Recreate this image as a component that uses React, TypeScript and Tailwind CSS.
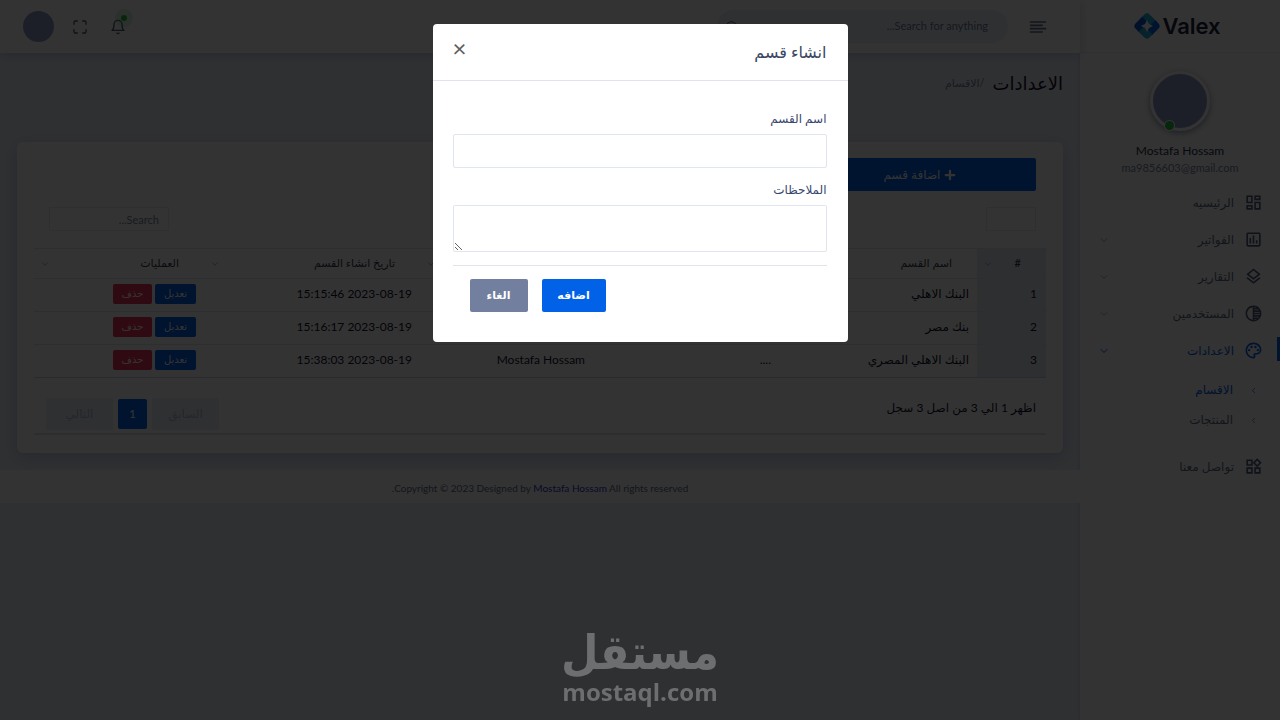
import React, { useState } from 'react';
import {
  MdOutlineDashboard,
  MdOutlineAssessment,
  MdOutlineLayers,
  MdOutlineTonality,
  MdOutlineColorLens,
  MdOutlineWidgets,
} from 'react-icons/md';
import { FiAlignLeft, FiBell, FiChevronDown, FiChevronLeft, FiMaximize, FiSearch } from 'react-icons/fi';
import { FaPlus } from 'react-icons/fa';

interface Section {
  id: number;
  name: string;
  notes: string;
  createdBy: string;
  createdAt: string;
}

const sections: Section[] = [
  { id: 1, name: 'البنك الاهلي', notes: '....', createdBy: 'Mostafa Hossam', createdAt: '2023-08-19 15:15:46' },
  { id: 2, name: 'بنك مصر', notes: '....', createdBy: 'Mostafa Hossam', createdAt: '2023-08-19 15:16:17' },
  { id: 3, name: 'البنك الاهلي المصري', notes: '....', createdBy: 'Mostafa Hossam', createdAt: '2023-08-19 15:38:03' },
];

const columns = [
  { title: '#', width: 'w-[69px]' },
  { title: 'اسم القسم', width: 'w-[198px]' },
  { title: 'الملاحظات', width: 'w-[186px]' },
  { title: 'اسم المستخدم', width: 'w-[173px]' },
  { title: 'تاريخ انشاء القسم', width: 'w-[216px]' },
  { title: 'العمليات', width: 'w-[170px]' },
];

const menu = [
  { label: 'الرئيسيه', icon: MdOutlineDashboard, expandable: false, active: false },
  { label: 'الفواتير', icon: MdOutlineAssessment, expandable: true, active: false },
  { label: 'التقارير', icon: MdOutlineLayers, expandable: true, active: false },
  { label: 'المستخدمين', icon: MdOutlineTonality, expandable: true, active: false },
  { label: 'الاعدادات', icon: MdOutlineColorLens, expandable: true, active: true },
];

const Logo: React.FC = () => (
  <a href="#" className="flex items-center gap-px" dir="ltr">
    <svg width="28" height="28" viewBox="0 0 28 28" aria-hidden="true">
      <g transform="rotate(45 14 14) translate(4 4)">
        <path d="M4 0 H13 V8 H0 V4 Q0 0 4 0 Z" fill="#1fa9d6" />
        <path d="M12 0 H16 Q20 0 20 4 V13 H12 Z" fill="#0162e8" />
        <path d="M7 12 H20 V16 Q20 20 16 20 H7 Z" fill="#1fa9d6" />
        <path d="M0 7 H8 V20 H4 Q0 20 0 16 Z" fill="#0a55d0" />
      </g>
      <path d="M14 8 L16 12 L20 14 L16 16 L14 20 L12 16 L8 14 L12 12 Z" fill="#fff" />
    </svg>
    <span className="font-['Inter',sans-serif] text-[22px] font-semibold text-[#1c273c]">Valex</span>
  </a>
);

const Sidebar: React.FC = () => (
  <aside className="w-50 shrink-0 self-stretch bg-white shadow-[0_0_4px_rgba(60,80,140,0.25)]">
    <div className="flex h-[53px] items-center justify-center border-b border-[#ecf0fa] pr-[6px]">
      <Logo />
    </div>
    <div className="flex flex-col items-center pt-[18px]">
      <div className="relative size-[60px] rounded-full border-3 border-white bg-[#8f9cc8] shadow-[0_2px_6px_rgba(40,50,90,0.5)]">
        <span className="absolute bottom-[-2px] left-3 size-[9px] rounded-full bg-[#22c03c] ring-1 ring-white" />
      </div>
      <h4 className="mt-3 text-xs leading-4 text-[#242f48]">Mostafa Hossam</h4>
      <span className="text-[11px] leading-[18px] text-[#7987a1]">ma9856603@gmail.com</span>
    </div>
    <nav className="pt-[7px] text-xs text-[#5b6e88]">
      <ul>
        {menu.map(({ label, icon: Icon, expandable, active }) => (
          <li key={label} className="relative">
            <a
              href="#"
              className={`flex h-[37px] items-center gap-[10px] pr-[17px] pl-[18px] ${active ? 'text-[#0162e8]' : ''}`}
            >
              <Icon size={19} className={active ? 'text-[#0162e8]' : 'text-[#4a5a7a]'} />
              <span className="flex-1">{label}</span>
              {expandable && (
                <FiChevronDown size={12} className={`shrink-0 ${active ? 'text-[#0162e8]' : 'text-[#a8b1c7]'}`} />
              )}
            </a>
            {active && <span className="absolute top-[5px] right-0 h-6 w-[3px] bg-[#0162e8]" />}
          </li>
        ))}
      </ul>
      <ul className="py-[6px]">
        <li>
          <a href="#" className="flex h-[30px] items-center gap-4 pr-[22px] text-[#0162e8]">
            <FiChevronLeft size={9} />
            <span>الاقسام</span>
          </a>
        </li>
        <li>
          <a href="#" className="flex h-[30px] items-center gap-4 pr-[22px]">
            <FiChevronLeft size={9} />
            <span>المنتجات</span>
          </a>
        </li>
      </ul>
      <a href="#" className="mt-[7px] flex h-[37px] items-center gap-[10px] pr-[17px]">
        <MdOutlineWidgets size={19} className="text-[#4a5a7a]" />
        <span>تواصل معنا</span>
      </a>
    </nav>
  </aside>
);

const Header: React.FC = () => (
  <header className="relative flex h-[53px] items-center justify-between bg-white pr-8 pl-[23px] shadow-[0_2px_10px_rgba(60,80,140,0.25)]">
    <div className="flex items-center gap-5">
      <button type="button" aria-label="القائمة">
        <FiAlignLeft size={20} className="text-[#5b6e88]" />
      </button>
      <div className="flex h-[33px] w-[291px] items-center rounded-full bg-[#ecf0fa] pr-5 pl-2">
        <input
          type="search"
          aria-label="Search"
          placeholder="Search for anything..."
          className="w-full flex-1 bg-transparent text-[11px] outline-none placeholder:text-[#6b7a99]"
        />
        <FiSearch size={14} className="shrink-0 text-[#4a5a7a]" />
      </div>
    </div>
    <div className="flex items-center gap-[22px]">
      <button type="button" aria-label="الاشعارات" className="relative">
        <FiBell size={16} className="text-[#4a5a7a]" />
        <span className="absolute -top-1 -right-px size-[6px] rounded-full bg-[#22c03c] ring-6 ring-[#22c03c]/15" />
      </button>
      <div className="flex items-center gap-[18px]">
        <button type="button" aria-label="ملء الشاشة">
          <FiMaximize size={16} className="text-[#4a5a7a]" />
        </button>
        <button type="button" aria-label="Mostafa Hossam" className="size-[31px] rounded-full bg-[#8f9cc8]" />
      </div>
    </div>
  </header>
);

const SectionsTable: React.FC = () => (
  <table className="w-full table-fixed border-collapse text-right text-xs">
    <thead>
      <tr className="h-[30px] border-y border-[#e1e5ef]">
        {columns.map(({ title, width }, i) => (
          <th key={title} scope="col" className={`${width} pr-[25px] pl-[6px] font-medium text-[#37374e] ${i === 0 ? 'bg-[#e4e9f4]' : ''}`}>
            <span className="flex items-center justify-between text-[11px]">
              {title}
              <FiChevronDown size={10} className="shrink-0 text-[#8f9cc0]" />
            </span>
          </th>
        ))}
      </tr>
    </thead>
    <tbody>
      {sections.map((section) => (
        <tr key={section.id} className="h-[33px] border-b border-[#e1e5ef] text-[#14112d] last:border-[#c9d0e0]">
          <td className="bg-[#e4e9f4] pr-[9px] pb-[2px]">{section.id}</td>
          <td className="pr-2 pb-[2px]">{section.name}</td>
          <td className="pr-2 pb-[2px]">{section.notes}</td>
          <td className="pr-2 pb-[2px]">{section.createdBy}</td>
          <td className="pr-2 pb-[2px]">{section.createdAt}</td>
          <td className="pr-2 pb-[2px]">
            <div className="flex gap-[3px] text-[10px] text-white">
              <button type="button" className="h-5 w-[41px] rounded-xs bg-[#0162e8]">تعديل</button>
              <button type="button" className="h-5 w-[39px] rounded-xs bg-[#ee335e]">حذف</button>
            </div>
          </td>
        </tr>
      ))}
    </tbody>
  </table>
);

const SectionsCard: React.FC<{ onAdd: () => void }> = ({ onAdd }) => (
  <section className="rounded-md bg-white px-[17px] pt-4 pb-[18px] shadow-[0_4px_16px_rgba(60,80,140,0.25)]">
    <div className="px-[10px]">
      <button
        type="button"
        onClick={onAdd}
        className="flex h-[33px] w-[232px] items-center justify-center gap-1 rounded-xs bg-[#0162e8] text-xs text-white"
      >
        <FaPlus size={12} />
        اضافة قسم
      </button>
      <div className="mt-4 mb-[17px] flex justify-between pl-[5px]">
        <select aria-label="عدد السجلات" className="h-6 w-[50px] appearance-none border border-[#e8ebf3] bg-white" />
        <input
          type="search"
          aria-label="Search"
          placeholder="Search..."
          className="h-6 w-[120px] border border-[#e8ebf3] px-[9px] text-[11px] placeholder:text-[#7987a1]"
        />
      </div>
    </div>
    <SectionsTable />
    <div className="mt-5 flex items-center justify-between border-b-2 border-[#d8deec] pr-[10px] pb-[3px] pl-3">
      <p className="pb-3 text-xs text-[#14112d]">اظهر 1 الي 3 من اصل 3 سجل</p>
      <div className="flex items-center gap-[5px] text-xs">
        <button type="button" className="h-8 w-[67px] rounded-xs bg-[#ecf0fa] text-[#b4bdd2]">السابق</button>
        <button type="button" className="h-[30px] w-[29px] rounded-xs bg-[#0162e8] text-white">1</button>
        <button type="button" className="h-8 w-[67px] rounded-xs bg-[#ecf0fa] text-[#b4bdd2]">التالي</button>
      </div>
    </div>
  </section>
);

const AddSectionModal: React.FC<{ onClose: () => void }> = ({ onClose }) => (
  <div className="fixed inset-0 bg-black/80 pt-6">
    <div role="dialog" aria-modal="true" aria-labelledby="modal-title" className="mx-auto w-full max-w-[415px] rounded-sm bg-white">
      <div className="flex h-[57px] items-center justify-between border-b border-[#e2e4ea] pr-[21px] pl-5">
        <h5 id="modal-title" className="text-base text-[#3b4863]">انشاء قسم</h5>
        <button type="button" aria-label="اغلاق" onClick={onClose} className="pb-2 text-2xl leading-5 text-[#606060]">
          ×
        </button>
      </div>
      <form className="pt-7 pr-[21px] pb-[30px] pl-5 text-xs" onSubmit={(e) => e.preventDefault()}>
        <label htmlFor="section-name" className="block h-[25px] leading-5 text-[#37466e]">اسم القسم</label>
        <input id="section-name" type="text" className="block h-[34px] w-full rounded-xs border border-[#e1e5ef] px-3" />
        <label htmlFor="section-notes" className="mt-3 block h-[25px] leading-5 text-[#37466e]">الملاحظات</label>
        <textarea id="section-notes" className="block h-[47px] w-full rounded-xs border border-[#e1e5ef] px-3 py-1" />
        <div className="mt-[13px] flex justify-end gap-[14px] border-t border-[#e2e4ea] pt-[13px] pl-[17px] text-[11px]">
          <button type="submit" className="h-[33px] w-16 rounded-xs bg-[#0162e8] font-bold text-white">اضافه</button>
          <button type="button" onClick={onClose} className="h-[33px] w-[58px] rounded-xs bg-[#737f9e] font-bold text-white">
            الغاء
          </button>
        </div>
      </form>
    </div>
  </div>
);

const Watermark: React.FC = () => (
  <div className="pointer-events-none fixed inset-x-0 bottom-3 flex flex-col items-center font-bold text-[#6d6e70]">
    <span className="font-['DejaVu_Sans_Condensed','DejaVu_Sans',sans-serif] text-5xl leading-[48px]">مستقل</span>
    <span className="font-['Open_Sans',sans-serif] text-2xl leading-8" dir="ltr">mostaql.com</span>
  </div>
);

const App: React.FC = () => {
  const [modalOpen, setModalOpen] = useState(true);

  return (
    <div dir="rtl" className="flex min-h-screen bg-[#ecf0fa] font-['Lato','DejaVu_Sans',sans-serif]">
      <Sidebar />
      <div className="min-w-0 flex-1">
        <Header />
        <main className="px-[17px] pb-[17px]">
          <div className="flex h-[89px] items-start gap-2 pt-4">
            <h1 className="text-lg text-[#14112d]">الاعدادات</h1>
            <span className="text-[11px] leading-7 text-[#7987a1]">/الاقسام</span>
          </div>
          <SectionsCard onAdd={() => setModalOpen(true)} />
        </main>
        <footer className="flex h-[33px] items-center justify-center bg-white text-[10px] text-[#5b6e88]">
          <p className="pt-1">
            <span dir="ltr">
              Copyright © 2023 Designed by <a href="#" className="text-[#2a35c8]">Mostafa Hossam</a> All rights reserved
            </span>
            .
          </p>
        </footer>
      </div>
      {modalOpen && <AddSectionModal onClose={() => setModalOpen(false)} />}
      <Watermark />
    </div>
  );
};

export default App;
